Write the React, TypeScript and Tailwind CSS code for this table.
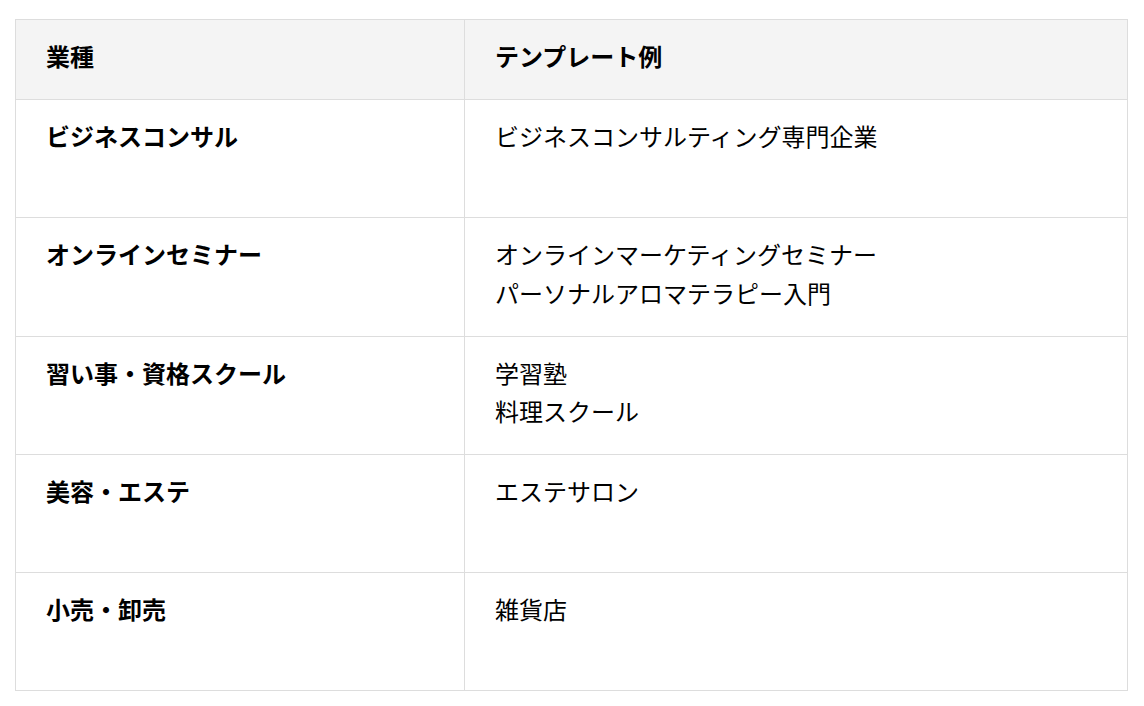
const rows: { kind: string; examples: string[] }[] = [
  { kind: "ビジネスコンサル", examples: ["ビジネスコンサルティング専門企業"] },
  { kind: "オンラインセミナー", examples: ["オンラインマーケティングセミナー", "パーソナルアロマテラピー入門"] },
  { kind: "習い事・資格スクール", examples: ["学習塾", "料理スクール"] },
  { kind: "美容・エステ", examples: ["エステサロン"] },
  { kind: "小売・卸売", examples: ["雑貨店"] },
]

export default function App() {
  return (
    <div className="min-h-screen bg-white px-[15px] pt-[19px] font-['Noto_Sans_CJK_JP',sans-serif] text-[24px] leading-[38.5px] text-black">
      <table className="w-[1113px] table-fixed border-collapse">
        <thead>
          <tr className="h-[80px] bg-[#f4f4f4]">
            <th className="w-[449px] border border-[#dddddd] px-[30px] pb-[6px] text-left align-middle font-bold">業種</th>
            <th className="border border-[#dddddd] px-[30px] pb-[6px] text-left align-middle font-bold">テンプレート例</th>
          </tr>
        </thead>
        <tbody>
          {rows.map((r) => (
            <tr key={r.kind} className="h-[118.25px]">
              <td className="border border-[#dddddd] px-[30px] pt-[17px] align-top font-bold">{r.kind}</td>
              <td className="border border-[#dddddd] px-[30px] pt-[17px] align-top">
                {r.examples.map((e) => (
                  <div key={e}>{e}</div>
                ))}
              </td>
            </tr>
          ))}
        </tbody>
      </table>
    </div>
  )
}
